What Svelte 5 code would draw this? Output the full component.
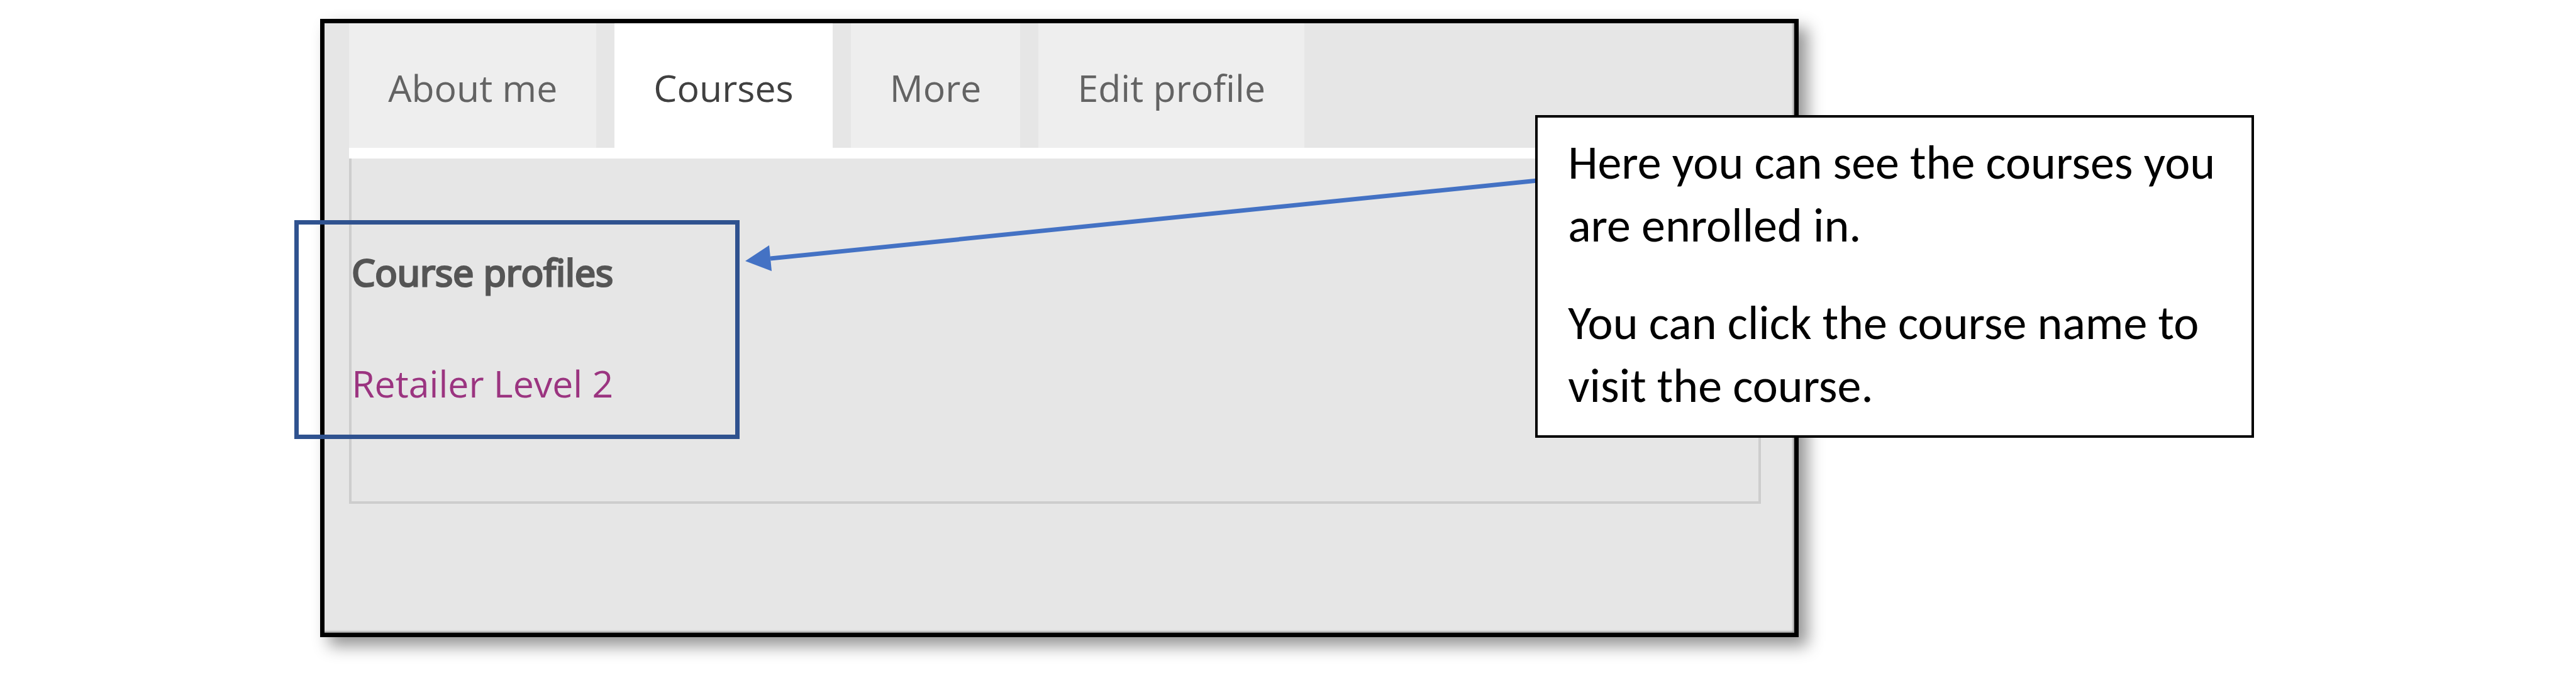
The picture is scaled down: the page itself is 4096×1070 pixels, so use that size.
<script>
  const tabs = [
    { label: 'About me' },
    { label: 'Courses', current: true },
    { label: 'More' },
    { label: 'Edit profile' }
  ];
</script>

<main class="stage">
  <section class="window">
    <nav class="tabs" aria-label="Profile sections">
      {#each tabs as tab}
        <a class="tab" class:current={tab.current} href="#profile" aria-current={tab.current ? 'page' : undefined}>{tab.label}</a>
      {/each}
    </nav>
    <div class="content" id="profile">
      <h2>Course profiles</h2>
      <a class="course" href="#course">Retailer Level 2</a>
    </div>
  </section>

  <div class="highlight"></div>

  <svg class="arrow" viewBox="0 0 1260 140" aria-hidden="true">
    <path d="M40 126 L1260 2" stroke="#4472c4" stroke-width="7" />
    <path d="M0 130 L38 105 L42 146 Z" fill="#4472c4" />
  </svg>

  <aside class="callout">
    <p>Here you can see the courses you are enrolled in.</p>
    <p>You can click the course name to visit the course.</p>
  </aside>
</main>

<style>
  :global(body) {
    margin: 0;
    background: #fff;
  }

  .stage {
    position: relative;
    padding: 30px 0 56px;
    font-family: 'Open Sans', 'Noto Sans', sans-serif;
  }

  .window {
    box-sizing: border-box;
    width: 57.4%;
    margin-left: 12.43%;
    padding: 0 53px 205px 39px;
    border: 7px solid #000;
    background: #e6e6e6;
    box-shadow:
      14px 14px 24px rgba(0, 0, 0, 0.42),
      inset -2px -2px 3px rgba(0, 0, 0, 0.35);
  }

  .tabs {
    display: flex;
    gap: 29px;
    border-bottom: 17px solid #fff;
  }

  .tab {
    padding: 62px 62px 56px;
    background: #eee;
    color: #636363;
    font-size: 59px;
    line-height: 80px;
    text-decoration: none;
  }

  .tab.current {
    background: #fff;
    color: #404040;
  }

  .content {
    padding: 140px 0 148px;
    border: 4px solid #cdcdcd;
    border-top: 0;
  }

  h2 {
    margin: 0 0 97px;
    color: #555;
    font-size: 59px;
    font-weight: 400;
    line-height: 80px;
    -webkit-text-stroke: 3px #555;
  }

  .course {
    display: block;
    width: max-content;
    color: #9b3480;
    font-size: 59px;
    line-height: 80px;
    text-decoration: none;
  }

  .highlight {
    position: absolute;
    box-sizing: border-box;
    top: 350px;
    left: 11.43%;
    width: 17.29%;
    height: 348px;
    border: 7px solid #2f528f;
  }

  .arrow {
    position: absolute;
    top: 285px;
    left: 28.92%;
    width: 30.76%;
    fill: none;
    overflow: visible;
  }

  .callout {
    position: absolute;
    box-sizing: border-box;
    top: 183px;
    left: 59.6%;
    width: 27.9%;
    padding: 21px 48px 29px;
    border: 4px solid #000;
    background: #fff;
    color: #000;
    font-family: Carlito, Lato, sans-serif;
    font-size: 76px;
    line-height: 100px;
  }

  .callout p {
    margin: 0;
  }

  .callout p + p {
    margin-top: 55px;
  }
</style>
